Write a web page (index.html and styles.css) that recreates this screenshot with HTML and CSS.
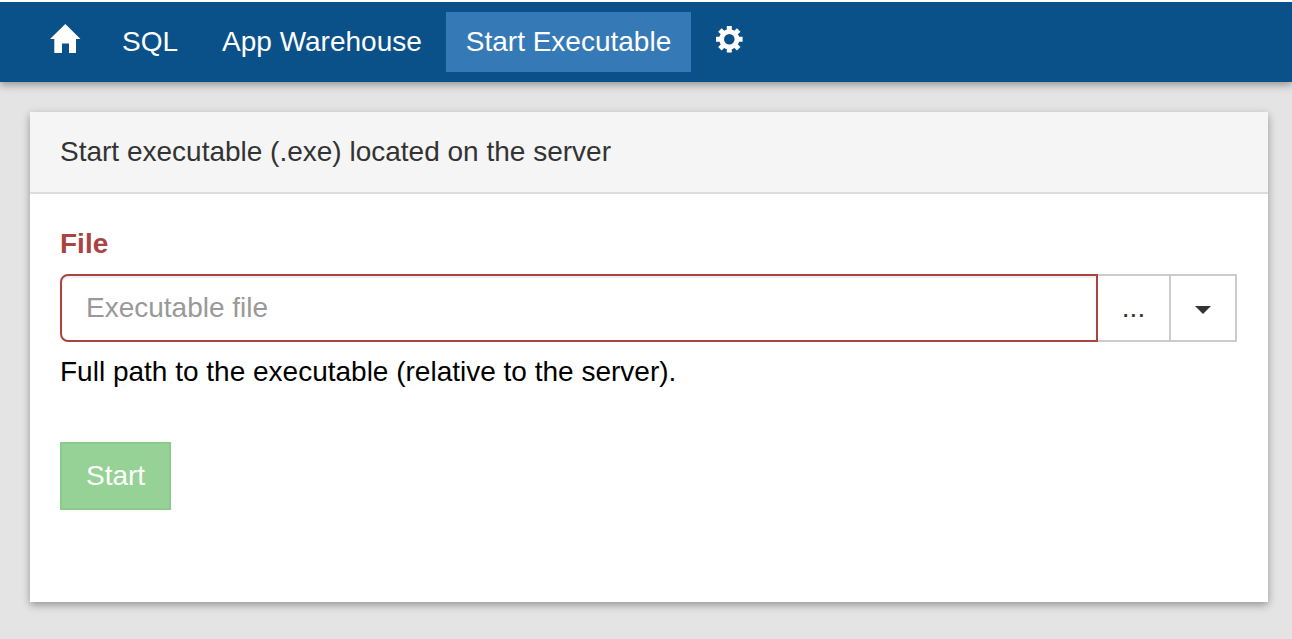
FILE: index.html
```html
<!DOCTYPE html>
<html lang="en">
<head>
<meta charset="utf-8">
<meta name="viewport" content="width=device-width, initial-scale=1">
<title>Start Executable</title>
<link rel="stylesheet" href="styles.css">
</head>
<body>
<nav class="navbar" aria-label="Main">
  <a class="nav-item" href="#home" aria-label="Home">
    <svg class="icon" viewBox="0 0 28 28" aria-hidden="true"><path d="M15.300 -1 L30.500 14 H26 V28 H19 V18.500 H12 V28 H4.300 V14 H0 Z"/></svg>
  </a>
  <a class="nav-item" href="#sql">SQL</a>
  <a class="nav-item" href="#warehouse">App Warehouse</a>
  <a class="nav-item active" href="#start" aria-current="page">Start Executable</a>
  <a class="nav-item" href="#settings" aria-label="Settings">
    <svg class="icon" viewBox="0 0 28 28" aria-hidden="true">
      <g transform="translate(14.3 14.3)" fill="none" stroke="#fff">
        <circle r="7.700" stroke-width="4.800"/>
        <path stroke-width="5" d="M0 -8 V-13.300 M0 8 V13.300 M-8 0 H-13.300 M8 0 H13.300 M6 6 L9.400 9.400 M-6 6 L-9.400 9.400 M6 -6 L9.400 -9.400 M-6 -6 L-9.400 -9.400"/>
      </g>
    </svg>
  </a>
</nav>
<main class="content">
  <section class="panel">
    <h1 class="panel-heading">Start executable (.exe) located on the server</h1>
    <form class="panel-body">
      <label class="label" for="file">File</label>
      <div class="input-group">
        <input class="input" id="file" type="text" placeholder="Executable file" aria-invalid="true" aria-describedby="file-help">
        <button class="addon browse" type="button" aria-label="Browse">...</button>
        <button class="addon toggle" type="button" aria-label="Recent files"><span class="caret"></span></button>
      </div>
      <p class="help" id="file-help">Full path to the executable (relative to the server).</p>
      <button class="submit" type="submit" disabled>Start</button>
    </form>
  </section>
</main>
</body>
</html>
```
FILE: styles.css
```css
* {
  box-sizing: border-box;
}

body {
  margin: 0;
  min-height: 100vh;
  border-top: 2px solid #fff;
  background: #e4e4e4;
  color: #000;
  font: 28px/40px "Liberation Sans", Arial, sans-serif;
}

button,
input {
  font: inherit;
}

.navbar {
  display: flex;
  gap: 4px;
  padding: 10px 30px;
  background: #0a5189;
  box-shadow: 0 3px 8px rgba(0, 0, 0, 0.35);
}

.nav-item {
  display: flex;
  align-items: center;
  height: 60px;
  padding: 0 20px;
  color: #fff;
  text-decoration: none;
  white-space: nowrap;
}

.nav-item.active {
  background: #357ab7;
}

.icon {
  width: 28px;
  height: 28px;
  margin-bottom: 6px;
  fill: #fff;
  overflow: visible;
}

.content {
  padding: 30px 24px 36px 30px;
}

.panel {
  background: #fff;
  box-shadow: 0 3px 8px rgba(0, 0, 0, 0.35);
}

.panel-heading {
  margin: 0;
  padding: 20px 30px;
  border-bottom: 2px solid #ddd;
  background: #f5f5f5;
  color: #333;
  font-size: 28px;
  font-weight: normal;
}

.panel-body {
  padding: 30px 31px 92px 30px;
}

.label {
  display: block;
  margin-bottom: 10px;
  color: #a94442;
  font-weight: bold;
}

.input-group {
  display: flex;
  height: 68px;
}

.input {
  position: relative;
  flex: 1;
  min-width: 0;
  padding: 12px 24px;
  border: 2px solid #a94442;
  border-radius: 8px 0 0 8px;
  background: #fff;
  box-shadow: inset 0 2px 2px rgba(0, 0, 0, 0.075);
  color: #555;
}

.input::placeholder {
  color: #999;
  opacity: 1;
}

.addon {
  display: flex;
  align-items: center;
  justify-content: center;
  margin-left: -2px;
  padding: 0;
  border: 2px solid #ccc;
  background: #fff;
  color: #333;
}

.browse {
  width: 75px;
}

.toggle {
  width: 68px;
}

.caret {
  margin-top: 4px;
  border-top: 8px solid #333;
  border-right: 8px solid transparent;
  border-left: 8px solid transparent;
}

.help {
  margin: 10px 0 50px;
}

.submit {
  display: block;
  height: 68px;
  padding: 0 24px;
  border: 2px solid #89cb8b;
  background: #96d296;
  color: #fff;
}
```
